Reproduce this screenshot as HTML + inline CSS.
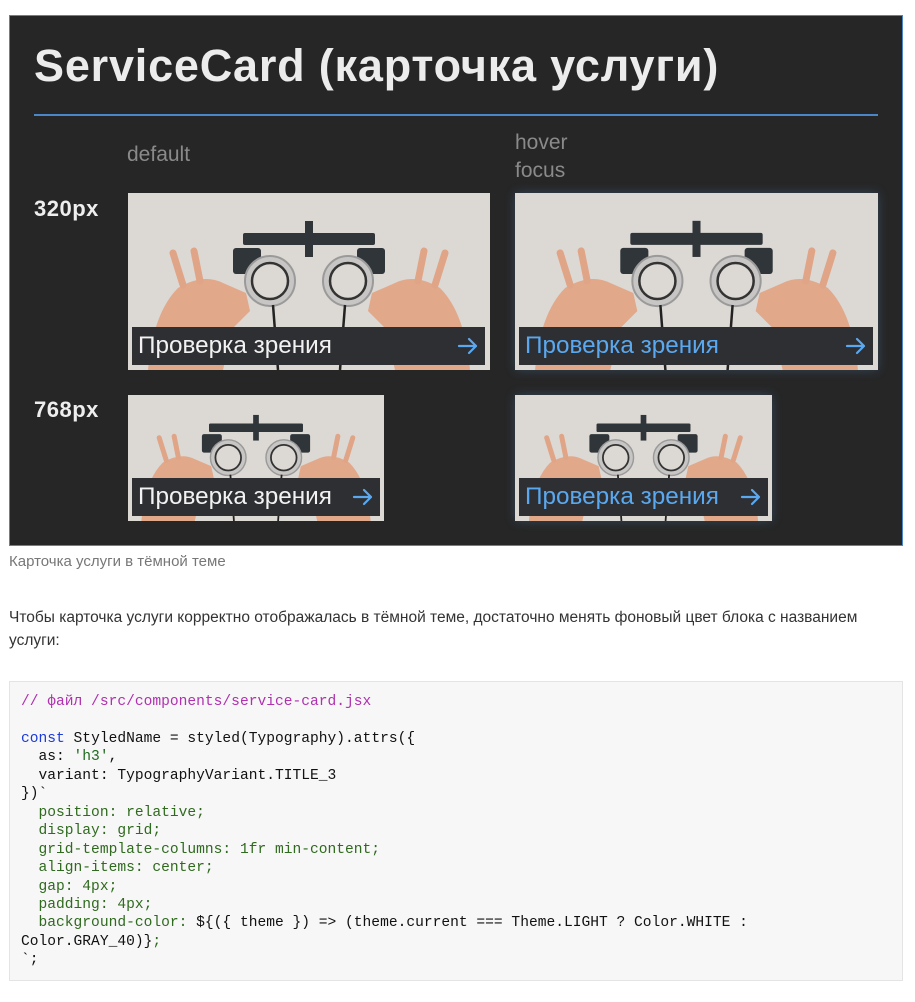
<!DOCTYPE html>
<html><head><meta charset="utf-8"><style>
*{margin:0;padding:0;box-sizing:border-box}
body{width:915px;height:1002px;background:#fff;font-family:"Liberation Sans","DejaVu Sans",sans-serif;position:relative;overflow:hidden}
.abs{position:absolute}
.panel{left:9px;top:15px;width:894px;height:531px;background:#262626;border:1px solid #4a86c8}
.title{left:34px;top:40px;font-size:45px;font-weight:bold;color:#ececec;white-space:nowrap;letter-spacing:0.8px}
.hr{left:34px;top:114px;width:844px;height:2px;background:#4a86c8}
.lbl{color:#8a8a8a;font-size:21px}
.size{color:#eee;font-size:22px;font-weight:bold;letter-spacing:0.5px}
.card{background:#d9d5d1;overflow:hidden}
.card svg.im{position:absolute;left:0;top:0;width:100%;height:100%}
.bar{position:absolute;background:#2e2f33;color:#f2f2f2;font-size:24.3px;display:flex;align-items:center;justify-content:space-between;padding:0 6px}
.bar.b{color:#5aa8ef}
.glow{box-shadow:0 0 10px rgba(90,168,239,.25)}
.cap{left:9px;top:553px;font-size:15px;color:#777}
.p{left:9px;top:606px;width:880px;font-size:15.5px;color:#333;line-height:23px}
.code{left:9px;top:681px;width:894px;height:300px;background:#f7f7f7;border:1px solid #e4e4e4;padding:11px 0 0 11px;font-family:"Liberation Mono",monospace;font-size:14.6px;line-height:18.45px;color:#111;white-space:pre}
.c{color:#b030b0}.k{color:#1c3ad8}.s{color:#1f6b1f}.g{color:#2f6a1e}
</style></head><body>
<svg width="0" height="0" style="position:absolute"><defs>
<g id="img">
<rect width="362" height="177" fill="#dcd8d4"/>
<path d="M20 177 Q25 120 50 95 Q75 80 95 90 L118 100 L122 118 L105 135 L95 177 Z" fill="#e2a88a"/>
<path d="M342 177 Q337 120 312 95 Q287 80 267 90 L244 100 L240 118 L257 135 L267 177 Z" fill="#e2a88a"/>
<path d="M55 92 L45 60 M72 88 L66 58" stroke="#e0a486" stroke-width="7" stroke-linecap="round"/>
<path d="M307 92 L317 60 M290 88 L296 58" stroke="#e0a486" stroke-width="7" stroke-linecap="round"/>
<rect x="115" y="40" width="132" height="12" rx="2" fill="#2f3538"/>
<rect x="177" y="28" width="8" height="36" fill="#2f3538"/>
<rect x="105" y="55" width="28" height="26" rx="3" fill="#2f3538"/>
<rect x="229" y="55" width="28" height="26" rx="3" fill="#2f3538"/>
<circle cx="142" cy="88" r="25" fill="#c8c6c4" stroke="#9a9a9a" stroke-width="2"/>
<circle cx="142" cy="88" r="18" fill="#dcd8d4" stroke="#333" stroke-width="2.5"/>
<circle cx="220" cy="88" r="25" fill="#c8c6c4" stroke="#9a9a9a" stroke-width="2"/>
<circle cx="220" cy="88" r="18" fill="#dcd8d4" stroke="#333" stroke-width="2.5"/>
<path d="M145 112 L150 177 M217 112 L212 177" stroke="#222" stroke-width="2.5"/>
</g>
<g id="ar"><path d="M2 11 H19 M12 4 L19 11 L12 18" fill="none" stroke="#5aa8ef" stroke-width="2.2" stroke-linecap="round" stroke-linejoin="round"/></g>
</defs></svg>

<div class="abs panel"></div>
<div class="abs title">ServiceCard (карточка услуги)</div>
<div class="abs hr"></div>
<div class="abs lbl" style="left:127px;top:143px">default</div>
<div class="abs lbl" style="left:515px;top:129px;line-height:28px">hover<br>focus</div>
<div class="abs size" style="left:34px;top:196px">320px</div>
<div class="abs size" style="left:34px;top:397px">768px</div>

<div class="abs card" style="left:128px;top:193px;width:362px;height:177px"><svg class="im" viewBox="0 0 362 177" preserveAspectRatio="xMidYMid slice"><use href="#img"/></svg>
<div class="bar" style="left:4px;top:134px;width:353px;height:38px"><span>Проверка зрения</span><svg width="22" height="22"><use href="#ar"/></svg></div></div>
<div class="abs card glow" style="left:515px;top:193px;width:363px;height:177px"><svg class="im" viewBox="0 0 362 177" preserveAspectRatio="xMidYMid slice"><use href="#img"/></svg>
<div class="bar b" style="left:4px;top:134px;width:354px;height:38px"><span>Проверка зрения</span><svg width="22" height="22"><use href="#ar"/></svg></div></div>
<div class="abs card" style="left:128px;top:395px;width:256px;height:126px"><svg class="im" viewBox="0 0 362 177" preserveAspectRatio="xMidYMid slice"><use href="#img"/></svg>
<div class="bar" style="left:4px;top:83px;width:248px;height:38px"><span>Проверка зрения</span><svg width="22" height="22"><use href="#ar"/></svg></div></div>
<div class="abs card glow" style="left:515px;top:395px;width:257px;height:126px"><svg class="im" viewBox="0 0 362 177" preserveAspectRatio="xMidYMid slice"><use href="#img"/></svg>
<div class="bar b" style="left:4px;top:83px;width:249px;height:38px"><span>Проверка зрения</span><svg width="22" height="22"><use href="#ar"/></svg></div></div>

<div class="abs cap">Карточка услуги в тёмной теме</div>
<div class="abs p">Чтобы карточка услуги корректно отображалась в тёмной теме, достаточно менять фоновый цвет блока с названием услуги:</div>
<div class="abs code"><span class="c">// файл /src/components/service-card.jsx</span>

<span class="k">const</span> StyledName = styled(Typography).attrs({
  as: <span class="s">'h3'</span>,
  variant: TypographyVariant.TITLE_3
})`<span class="g">
  position: relative;
  display: grid;
  grid-template-columns: 1fr min-content;
  align-items: center;
  gap: 4px;
  padding: 4px;
  background-color: </span>${({ theme }) =&gt; (theme.current === Theme.LIGHT ? Color.WHITE :
Color.GRAY_40)}<span class="g">;</span>
`;</div>
</body></html>
